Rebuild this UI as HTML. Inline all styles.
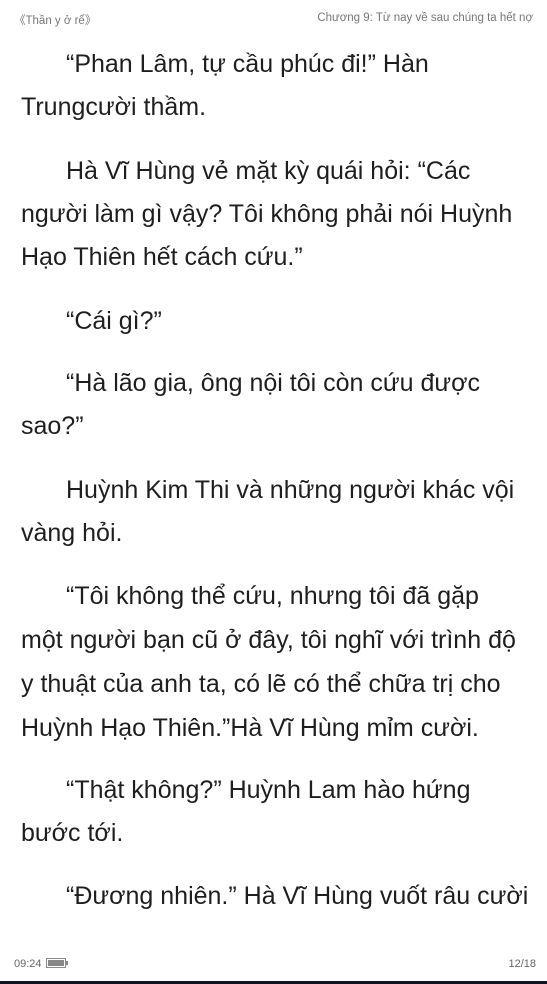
<!DOCTYPE html>
<html><head><meta charset="utf-8"><style>
html,body{margin:0;padding:0;}
body{width:547px;height:984px;background:#fff;position:relative;overflow:hidden;font-family:"Liberation Sans",sans-serif;}
.l{position:absolute;left:21px;font-size:25px;color:#1e1e1e;white-space:nowrap;line-height:30px;}
.i{left:66px;}
.h{position:absolute;top:12px;font-size:11.5px;color:#777;}
.f{position:absolute;top:958px;font-size:11px;color:#666;}
</style></head><body>
<div class="h" style="left:14px">《Thần y ở rể》</div>
<div class="h" style="right:14px">Chương 9: Từ nay về sau chúng ta hết nợ</div>
<div class="l i" style="top:49px">“Phan Lâm, tự cầu phúc đi!” Hàn</div>
<div class="l" style="top:92px">Trungcười thầm.</div>
<div class="l i" style="top:156px">Hà Vĩ Hùng vẻ mặt kỳ quái hỏi: “Các</div>
<div class="l" style="top:199px">người làm gì vậy? Tôi không phải nói Huỳnh</div>
<div class="l" style="top:242px">Hạo Thiên hết cách cứu.”</div>
<div class="l i" style="top:306px">“Cái gì?”</div>
<div class="l i" style="top:368px">“Hà lão gia, ông nội tôi còn cứu được</div>
<div class="l" style="top:411px">sao?”</div>
<div class="l i" style="top:475px">Huỳnh Kim Thi và những người khác vội</div>
<div class="l" style="top:518px">vàng hỏi.</div>
<div class="l i" style="top:581px">“Tôi không thể cứu, nhưng tôi đã gặp</div>
<div class="l" style="top:625px">một người bạn cũ ở đây, tôi nghĩ với trình độ</div>
<div class="l" style="top:669px">y thuật của anh ta, có lẽ có thể chữa trị cho</div>
<div class="l" style="top:713px">Huỳnh Hạo Thiên.”Hà Vĩ Hùng mỉm cười.</div>
<div class="l i" style="top:775px">“Thật không?” Huỳnh Lam hào hứng</div>
<div class="l" style="top:818px">bước tới.</div>
<div class="l i" style="top:881px">“Đương nhiên.” Hà Vĩ Hùng vuốt râu cười</div>
<div class="f" style="left:14px">09:24</div>
<div style="position:absolute;left:46px;top:958px;width:20px;height:10px;border:1px solid #888;box-sizing:border-box;padding:1px"><div style="background:#888;width:100%;height:100%"></div></div>
<div style="position:absolute;left:66px;top:961px;width:2px;height:4px;background:#888"></div>
<div class="f" style="right:11px">12/18</div>
<div style="position:absolute;left:0;top:981px;width:547px;height:3px;background:#111522"></div>
</body></html>
